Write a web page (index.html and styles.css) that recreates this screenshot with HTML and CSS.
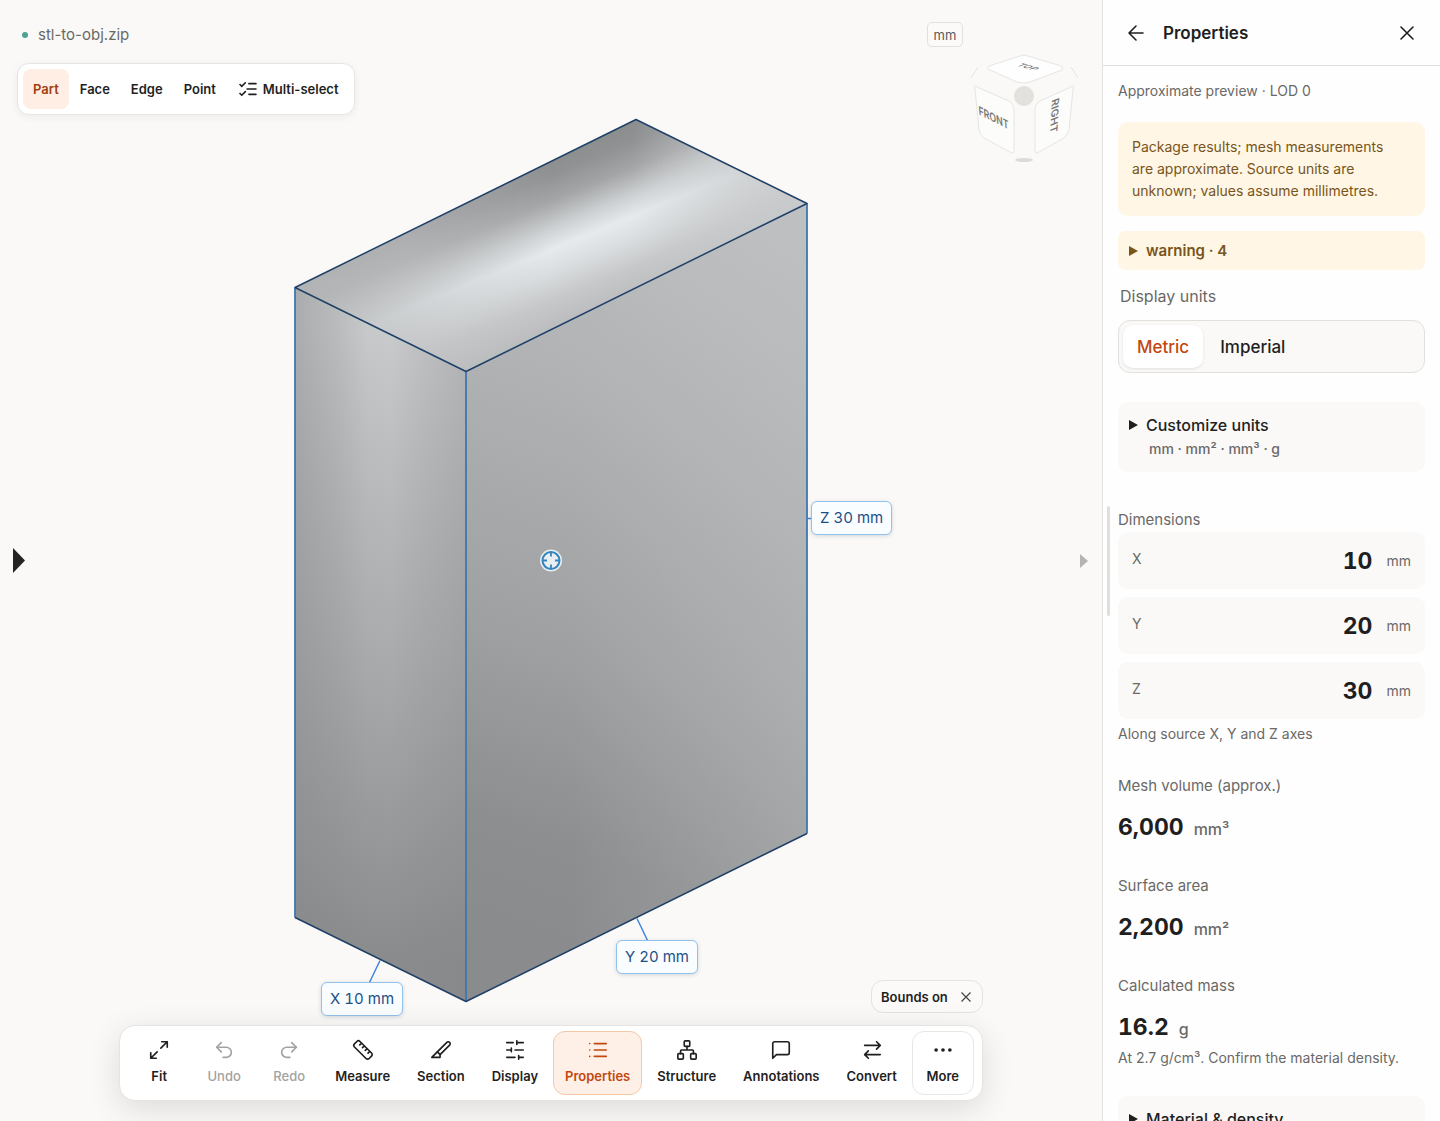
FILE: index.html
```html
<!DOCTYPE html>
<html lang="en">
<head>
<meta charset="utf-8">
<meta name="viewport" content="width=device-width, initial-scale=1">
<title>stl-to-obj.zip</title>
<link rel="stylesheet" href="styles.css">
</head>
<body>
<div class="app">
  <main class="viewport">
    <svg class="scene" viewBox="-551 -560 1102 1120" aria-hidden="true">
      <defs>
        <linearGradient id="topBase" gradientUnits="userSpaceOnUse" x1="5" y1="-426" x2="74" y2="-259">
          <stop offset="0" stop-color="#868889"/>
          <stop offset=".2" stop-color="#909293"/>
          <stop offset=".33" stop-color="#a3a5a6"/>
          <stop offset=".47" stop-color="#cdd0d2"/>
          <stop offset=".58" stop-color="#e6eaed"/>
          <stop offset=".7" stop-color="#dadddf"/>
          <stop offset=".84" stop-color="#c6c8c9"/>
          <stop offset="1" stop-color="#b9bbbc"/>
        </linearGradient>
        <linearGradient id="topFade" gradientUnits="userSpaceOnUse" x1="-256" y1="0" x2="256" y2="0">
          <stop offset="0" stop-color="#b4b6b7" stop-opacity=".9"/>
          <stop offset=".22" stop-color="#bec0c1" stop-opacity=".6"/>
          <stop offset=".5" stop-color="#c2c4c5" stop-opacity="0"/>
          <stop offset=".66" stop-color="#c8cacb" stop-opacity="0"/>
          <stop offset=".86" stop-color="#c8cacb" stop-opacity=".6"/>
          <stop offset="1" stop-color="#c8cacb" stop-opacity=".9"/>
        </linearGradient>
        <linearGradient id="leftBase" x1="0" y1="0" x2="1" y2="0">
          <stop offset="0" stop-color="#aaacad"/>
          <stop offset=".25" stop-color="#b9bbbc"/>
          <stop offset=".42" stop-color="#c6c8ca"/>
          <stop offset=".56" stop-color="#c8cacc"/>
          <stop offset=".75" stop-color="#bec0c1"/>
          <stop offset="1" stop-color="#b3b5b6"/>
        </linearGradient>
        <linearGradient id="leftShade" gradientUnits="userSpaceOnUse" x1="0" y1="-230" x2="0" y2="400">
          <stop offset="0" stop-color="#7f8283" stop-opacity="0"/>
          <stop offset=".5" stop-color="#858788" stop-opacity=".45"/>
          <stop offset="1" stop-color="#828485" stop-opacity=".9"/>
        </linearGradient>
        <linearGradient id="rightBase" gradientUnits="userSpaceOnUse" x1="200" y1="-340" x2="-60" y2="380">
          <stop offset="0" stop-color="#bcbebf"/>
          <stop offset=".3" stop-color="#afb1b2"/>
          <stop offset=".6" stop-color="#9fa1a2"/>
          <stop offset=".85" stop-color="#8c8e8f"/>
          <stop offset="1" stop-color="#898b8c"/>
        </linearGradient>
        <linearGradient id="rightLift" gradientUnits="userSpaceOnUse" x1="20" y1="0" x2="256" y2="0">
          <stop offset="0" stop-color="#c0c2c3" stop-opacity="0"/>
          <stop offset="1" stop-color="#c0c2c3" stop-opacity=".35"/>
        </linearGradient>
      </defs>
      <path fill="url(#topBase)" d="M-256-273 85-441 256-357-85-189z"/>
      <path fill="url(#topFade)" d="M-256-273 85-441 256-357-85-189z"/>
      <path fill="url(#leftBase)" d="M-256-273-85-189V441L-256 357z"/>
      <path fill="url(#leftShade)" d="M-256-273-85-189V441L-256 357z"/>
      <path fill="url(#rightBase)" d="M-85-189 256-357V273L-85 441z"/>
      <path fill="url(#rightLift)" d="M-85-189 256-357V273L-85 441z"/>
      <g fill="none" stroke-linejoin="round">
        <path stroke="#7fb0e4" stroke-width="2" stroke-opacity=".7" d="M-256-273V357M-85-189V441M256-357V273"/>
        <path stroke="#2560a0" stroke-width="1.3" d="M-256-273V357M-85-189V441M256-357V273"/>
        <path stroke="#1f4068" stroke-width="1.5" d="M-256-273 85-441 256-357-85-189zM-256 357-85 441 256 273"/>
        <path stroke="#3f86dc" stroke-width="1.5" d="M-171 400-182 423M86 358 97 381M256-42H260"/>
      </g>
      <circle r="11" fill="#e9eef2"/>
      <g fill="none" stroke="#3584bd" stroke-width="2">
        <circle r="8.5"/>
        <path d="M0-8V-4M0 8V4M-8 0H-4M8 0H4" stroke-width="1.8"/>
      </g>
    </svg>
    <div class="dimension-layer">
      <span class="dimension dimension-x">X 10 mm</span>
      <span class="dimension dimension-y">Y 20 mm</span>
      <span class="dimension dimension-z">Z 30 mm</span>
    </div>

    <header class="top-bar">
      <div class="top-left">
        <div class="file"><span class="status-dot"></span>stl-to-obj.zip</div>
        <div class="select-modes" role="group" aria-label="Selection mode">
          <button type="button" class="mode is-active" aria-pressed="true">Part</button>
          <button type="button" class="mode">Face</button>
          <button type="button" class="mode">Edge</button>
          <button type="button" class="mode">Point</button>
          <button type="button" class="mode">
            <svg class="mode-icon" viewBox="2 3 20 18" aria-hidden="true"><path d="m3 17 2 2 4-4M3 7l2 2 4-4M13 6h8M11 12h10M13 18h8"/></svg>Multi-select
          </button>
        </div>
      </div>
      <div class="top-right">
        <button type="button" class="unit-chip">mm</button>
        <svg class="view-cube" viewBox="0 0 110 114" role="img" aria-label="View cube">
          <g fill="#fefefe" stroke="#e6e5e3" stroke-width="1" stroke-linejoin="round">
            <path d="M19 16Q16 18 20 20L47 32Q54 34 60 32L92 20Q94 18 91 16L58 6Q54 4 50 6z"/>
            <path fill="#fcfcfb" d="M7 37Q4 33 5 39L9 80Q10 85 14 88L40 102Q44 105 44 100V60Q44 54 39 51z"/>
            <path fill="#fcfcfb" d="M101 37Q104 33 103 39L99 80Q98 84 94 88L69 102Q65 105 65 100V60Q65 54 70 51z"/>
            <path fill="none" d="M8 17 1 28M101 17 108 28"/>
          </g>
          <circle cx="54" cy="46" r="10" fill="#e3e1dd"/>
          <ellipse cx="54" cy="110" rx="9" ry="2" fill="#dddbd7"/>
          <g class="cube-text">
            <text transform="matrix(.8 .4 .1 1.1 24 72)">FRONT</text>
            <text transform="matrix(-.06 1 -.9 .35 81 67)">RIGHT</text>
            <text transform="matrix(.8 .22 -.8 .28 55 18)">TOP</text>
          </g>
        </svg>
      </div>
    </header>

    <div class="side-handles">
      <button type="button" class="handle handle-left" aria-label="Open left panel"><svg width="12" height="25" viewBox="0 0 12 25"><path d="M0 0 12 12.500 0 25z" fill="#242424"/></svg></button>
      <button type="button" class="handle handle-right" aria-label="Collapse right panel"><svg width="8" height="14" viewBox="0 0 8 14"><path d="M0 0 8 7 0 14z" fill="#b5b4b1"/></svg></button>
    </div>

    <div class="bottom-dock">
      <button type="button" class="bounds-chip">Bounds on
        <svg class="chip-close" viewBox="0 0 10 10" aria-hidden="true"><path d="M.5.500l9 9M9.500.500l-9 9"/></svg>
      </button>
      <nav class="toolbar" aria-label="Tools">
        <button type="button" class="tool"><svg class="icon" viewBox="0 0 24 24"><path d="m14 10 7-7M15 3h6v6M10 14l-7 7M9 21H3v-6"/></svg>Fit</button>
        <button type="button" class="tool" disabled><svg class="icon" viewBox="0 0 24 24"><path d="M9 14 4 9l5-5"/><path d="M4 9h10.500a5.500 5.500 0 0 1 0 11H11"/></svg>Undo</button>
        <button type="button" class="tool" disabled><svg class="icon" viewBox="0 0 24 24"><path d="m15 14 5-5-5-5"/><path d="M20 9H9.500a5.500 5.500 0 0 0 0 11H13"/></svg>Redo</button>
        <button type="button" class="tool"><svg class="icon" viewBox="0 0 24 24"><path d="M21.300 15.300a2.400 2.400 0 0 1 0 3.400l-2.600 2.600a2.400 2.400 0 0 1-3.400 0L2.700 8.700a2.410 2.410 0 0 1 0-3.400l2.600-2.600a2.410 2.410 0 0 1 3.400 0zM14.500 12.500l2-2M11.500 9.500l2-2M8.500 6.500l2-2M17.500 15.500l2-2"/></svg>Measure</button>
        <button type="button" class="tool"><svg class="icon" viewBox="0 0 24 24"><path d="m8 14-6 6h9v-3"/><path d="M18.370 3.630 8 14l3 3L21.370 6.630a2.120 2.120 0 1 0-3-3z"/></svg>Section</button>
        <button type="button" class="tool"><svg class="icon" viewBox="0 0 24 24"><path d="M21 4h-7M10 4H3M21 12h-9M8 12H3M21 20h-5M12 20H3M14 2v4M8 10v4M16 18v4"/></svg>Display</button>
        <button type="button" class="tool is-active" aria-pressed="true"><svg class="icon" viewBox="0 0 24 24"><path d="M8 5h13M8 12h13M8 19h13M3 5h.01M3 12h.01M3 19h.01"/></svg>Properties</button>
        <button type="button" class="tool"><svg class="icon" viewBox="0 0 24 24"><rect x="9" y="2" width="6" height="6" rx="1"/><rect x="2" y="16" width="6" height="6" rx="1"/><rect x="16" y="16" width="6" height="6" rx="1"/><path d="M5 16v-3a1 1 0 0 1 1-1h12a1 1 0 0 1 1 1v3M12 12V8"/></svg>Structure</button>
        <button type="button" class="tool"><svg class="icon" viewBox="0 0 24 24"><path d="M21 15a2 2 0 0 1-2 2H7l-4 4V5a2 2 0 0 1 2-2h14a2 2 0 0 1 2 2z"/></svg>Annotations</button>
        <button type="button" class="tool"><svg class="icon" viewBox="0 0 24 24"><path d="m17 3 4 4-4 4M21 7H4M8 21l-4-4 4-4M4 17h17"/></svg>Convert</button>
        <button type="button" class="tool is-outlined"><svg class="icon" viewBox="0 0 24 24"><g fill="currentColor" stroke="none"><circle cx="4.500" cy="12" r="2"/><circle cx="12" cy="12" r="2"/><circle cx="19.500" cy="12" r="2"/></g></svg>More</button>
      </nav>
    </div>
  </main>

  <aside class="panel" aria-labelledby="panel-title">
    <span class="resize-grip"></span>
    <header class="panel-header">
      <button type="button" class="icon-button" aria-label="Back"><svg class="icon" viewBox="0 0 24 24"><path d="M19 12H5M12 19l-7-7 7-7"/></svg></button>
      <h2 class="panel-title" id="panel-title">Properties</h2>
      <button type="button" class="icon-button" aria-label="Close"><svg class="icon" viewBox="0 0 24 24"><path d="M18 6 6 18M6 6l12 12"/></svg></button>
    </header>
    <div class="panel-body">
      <p class="preview-note">Approximate preview · LOD 0</p>
      <p class="notice">Package results; mesh measurements are approximate. Source units are unknown; values assume millimetres.</p>
      <details class="warnings"><summary><svg class="marker" viewBox="0 0 9 10"><path d="M0 0 9 5 0 10z"/></svg>warning · 4</summary></details>

      <h3 class="units-title">Display units</h3>
      <div class="segmented" role="group" aria-label="Display units">
        <button type="button" class="segment is-active" aria-pressed="true">Metric</button>
        <button type="button" class="segment">Imperial</button>
      </div>
      <details class="disclosure units"><summary><svg class="marker" viewBox="0 0 9 10"><path d="M0 0 9 5 0 10z"/></svg>Customize units<span class="units-summary">mm · mm² · mm³ · g</span></summary></details>

      <h3 class="label">Dimensions</h3>
      <dl class="dimensions">
        <div class="axis"><dt>X</dt><dd><strong>10</strong><span>mm</span></dd></div>
        <div class="axis"><dt>Y</dt><dd><strong>20</strong><span>mm</span></dd></div>
        <div class="axis"><dt>Z</dt><dd><strong>30</strong><span>mm</span></dd></div>
      </dl>
      <p class="hint">Along source X, Y and Z axes</p>

      <dl class="metrics">
        <div class="metric"><dt>Mesh volume (approx.)</dt><dd><strong>6,000</strong><span>mm³</span></dd></div>
        <div class="metric"><dt>Surface area</dt><dd><strong>2,200</strong><span>mm²</span></dd></div>
        <div class="metric"><dt>Calculated mass</dt><dd><strong>16.2</strong><span>g</span></dd></div>
      </dl>
      <p class="hint">At 2.7 g/cm³. Confirm the material density.</p>
      <details class="disclosure material"><summary><svg class="marker" viewBox="0 0 9 10"><path d="M0 0 9 5 0 10z"/></svg>Material &amp; density</summary></details>
    </div>
  </aside>
</div>
</body>
</html>
```
FILE: styles.css
```css
* { box-sizing: border-box; }

body {
  margin: 0;
  background: #faf9f7;
  color: #1f1f1f;
  font-family: Inter, "Liberation Sans", sans-serif;
  font-size: 14px;
}

button { font: inherit; color: inherit; cursor: pointer; }
h2, h3, p, dl, dd { margin: 0; }
svg { display: block; }

.icon {
  width: 22px;
  height: 22px;
  fill: none;
  stroke: currentColor;
  stroke-width: 1.8;
  stroke-linecap: round;
  stroke-linejoin: round;
}

.app { display: flex; height: 100vh; overflow: hidden; }

/* Viewport */
.viewport {
  position: relative;
  flex: 1;
  min-width: 0;
  display: flex;
  flex-direction: column;
  justify-content: space-between;
  overflow: hidden;
}
.scene { position: absolute; inset: 0; width: 100%; height: 100%; }

.dimension-layer { position: absolute; left: 50%; top: 50%; }
.dimension {
  position: absolute;
  padding: 0 8px;
  border: 1px solid #93c1ec;
  border-radius: 6px;
  background: #fafdff;
  color: #1c4f86;
  font-size: 15px;
  font-variant-numeric: tabular-nums;
  line-height: 32px;
  white-space: nowrap;
  box-shadow: 0 1px 4px rgba(30, 60, 100, .18);
}
.dimension-x { left: -230px; top: 421px; }
.dimension-y { left: 65px; top: 379px; }
.dimension-z { left: 260px; top: -60px; }

.top-bar { position: relative; display: flex; justify-content: space-between; padding: 22px 22px 0 17px; }
.file { display: flex; align-items: center; gap: 10px; padding-left: 5px; font-size: 15px; line-height: 25px; color: #6a6967; }
.status-dot { width: 6px; height: 6px; border-radius: 50%; background: #4ba492; }

.select-modes {
  display: flex;
  gap: 1px;
  margin-top: 16px;
  padding: 5px;
  border: 1px solid #e8e6e3;
  border-radius: 12px;
  background: #fff;
  box-shadow: 0 2px 8px rgba(0, 0, 0, .06);
}
.mode {
  display: flex;
  align-items: center;
  gap: 6px;
  height: 40px;
  padding: 0 10px;
  border: 0;
  border-radius: 8px;
  background: none;
  font-size: 13px;
  font-weight: 600;
}
.mode:last-child { padding-left: 12px; }
.mode.is-active { background: #feeee4; color: #a33c12; }
.mode-icon { width: 18px; height: 16px; fill: none; stroke: currentColor; stroke-width: 1.8; stroke-linecap: round; }

.top-right { display: flex; align-items: flex-start; gap: 7px; }
.unit-chip {
  width: 36px;
  height: 25px;
  padding: 0;
  border: 1px solid #e2e0dd;
  border-radius: 5px;
  background: #fbfaf9;
  color: #5c5b59;
  font-size: 13px;
}
.view-cube { width: 110px; height: 114px; margin-top: 28px; }
.cube-text { fill: #777674; font-size: 11px; font-weight: 600; text-anchor: middle; }

.side-handles {
  position: absolute;
  inset: 0 14px 0 13px;
  display: flex;
  align-items: center;
  justify-content: space-between;
  pointer-events: none;
}
.handle { padding: 0; border: 0; background: none; pointer-events: auto; }

.bottom-dock {
  position: relative;
  align-self: center;
  display: flex;
  flex-direction: column;
  align-items: flex-end;
  gap: 12px;
  padding-bottom: 20px;
}
.bounds-chip {
  display: flex;
  align-items: center;
  gap: 13px;
  height: 33px;
  padding: 0 11px 0 9px;
  border: 1px solid #e5e3e0;
  border-radius: 12px;
  background: #fbfaf9;
  font-size: 13px;
  font-weight: 600;
}
.chip-close { width: 10px; height: 10px; stroke: #444; stroke-width: 1.2; }

.toolbar {
  display: flex;
  gap: 3px;
  padding: 5px 8px;
  border: 1px solid #e6e4e1;
  border-radius: 16px;
  background: #fff;
  box-shadow: 0 8px 32px rgba(0, 0, 0, .12);
}
.tool {
  display: flex;
  flex-direction: column;
  align-items: center;
  gap: 7px;
  min-width: 62px;
  height: 64px;
  padding: 7px 11px 0;
  border: 1px solid transparent;
  border-radius: 12px;
  background: none;
  font-size: 13px;
  font-weight: 600;
  line-height: 16px;
}
.tool:disabled { color: #a3a2a0; font-weight: 500; }
.tool.is-active { border-color: #f5c8a8; background: #fef0e6; color: #c2480f; }
.tool.is-outlined { border-color: #e8e6e3; }

/* Properties panel */
.panel {
  position: relative;
  display: flex;
  flex-direction: column;
  width: 338px;
  border-left: 1px solid #e3e1de;
  background: #fefefe;
}
.resize-grip {
  position: absolute;
  left: 4px;
  top: 50%;
  width: 3px;
  height: 110px;
  margin-top: -55px;
  border-radius: 2px;
  background: #e2dfda;
}
.panel-header {
  display: flex;
  flex: none;
  align-items: center;
  height: 66px;
  padding: 0 17px;
  border-bottom: 1px solid #e3e1de;
}
.icon-button { padding: 4px; border: 0; background: none; }
.icon-button .icon { width: 24px; height: 24px; stroke-width: 1.6; }
.panel-title { flex: 1; padding-left: 11px; font-size: 17px; font-weight: 600; line-height: 24px; }

.panel-body { flex: 1; min-height: 0; overflow-y: auto; padding: 15px 15px 24px; scrollbar-width: none; }
.preview-note { color: #6a6967; line-height: 20px; }
.notice {
  margin-top: 21px;
  padding: 14px 28px 14px 14px;
  border-radius: 10px;
  background: #fff6e5;
  color: #78551a;
  line-height: 22px;
}
summary { display: flex; flex-wrap: wrap; align-items: center; list-style: none; cursor: pointer; }
.marker { width: 9px; height: 10px; margin-right: 8px; fill: currentColor; }
.warnings { margin-top: 15px; border-radius: 8px; background: #fff6e5; color: #78551a; font-size: 15px; font-weight: 600; }
.warnings summary { height: 39px; padding: 0 11px; }

.units-title { margin: 14px 2px 12px; color: #6a6967; font-size: 16px; font-weight: 400; line-height: 24px; }
.segmented {
  display: flex;
  gap: 3px;
  padding: 4px;
  border: 1px solid #e2e0dd;
  border-radius: 12px;
  background: #faf9f8;
}
.segment {
  height: 43px;
  padding: 0 14px;
  border: 0;
  border-radius: 10px;
  background: none;
  font-size: 17px;
  font-weight: 500;
}
.segment.is-active { background: #fff; color: #c2480f; box-shadow: 0 1px 3px rgba(0, 0, 0, .1); }

.disclosure { border-radius: 10px; background: #faf9f8; font-size: 16px; font-weight: 500; line-height: 24px; }
.disclosure summary { padding: 11px; }
.units { margin-top: 29px; }
.units-summary { flex-basis: 100%; padding-left: 20px; color: #6a6967; font-size: 14px; }
.material { margin-top: 27px; }

.label { margin-top: 36px; color: #6a6967; font-size: 15px; font-weight: 400; line-height: 24px; }
.dimensions { display: grid; gap: 8px; }
.axis {
  display: flex;
  align-items: center;
  justify-content: space-between;
  height: 57px;
  padding: 0 14px;
  border-radius: 10px;
  background: #faf9f8;
  color: #6a6967;
}
.axis dt { padding-bottom: 4px; }
.axis dd { display: flex; align-items: center; gap: 14px; }
strong { color: #1f1f1f; font-size: 23px; font-weight: 700; font-variant-numeric: tabular-nums; line-height: 32px; }

.hint { margin-top: 4px; color: #6a6967; line-height: 22px; }
.metrics { display: grid; gap: 31px; margin-top: 29px; }
.metric dt { margin-bottom: 13px; color: #6a6967; font-size: 15px; line-height: 24px; }
.metric dd { display: flex; align-items: baseline; gap: 10px; height: 32px; color: #6a6967; font-size: 16px; font-weight: 500; }
```
